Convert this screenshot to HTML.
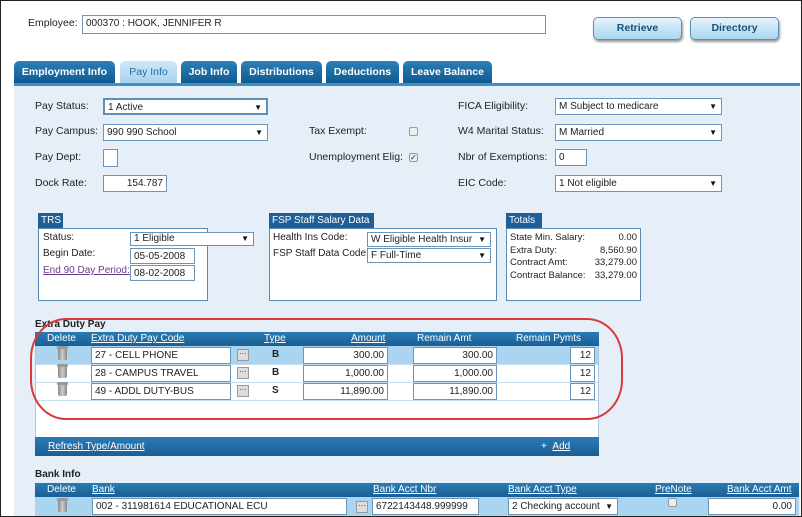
<!DOCTYPE html>
<html><head><style>
*{box-sizing:border-box;margin:0;padding:0}
body{width:802px;height:517px;overflow:hidden;background:#fff;font-family:"Liberation Sans",sans-serif;font-size:10.5px;color:#222;position:relative}
.a{position:absolute}
.frame{left:0;top:0;width:802px;height:517px;border:1px solid #222;z-index:50;pointer-events:none}
.inp{position:absolute;background:#fff;border:1px solid #6a95b8;height:17px;line-height:15px;padding:0 3px;font-size:10px;white-space:nowrap;overflow:hidden}
.sel:after{content:"▼";position:absolute;right:4px;top:0;font-size:8px;color:#111}
.r{text-align:right}
.tab{position:absolute;top:61px;height:22px;background:linear-gradient(#2a80b8,#0f5a8f);color:#fff;font-weight:bold;font-size:10.5px;line-height:22px;text-align:center;border-radius:5px 5px 0 0}
.btn{position:absolute;top:17px;height:23px;border:1px solid #5a8fb5;border-radius:5px;background:linear-gradient(#e6f4fc,#a9d6f0);color:#1c4f7a;font-weight:bold;text-align:center;line-height:21px;font-size:10.5px;box-shadow:1px 2px 2px #999}
.lbl{position:absolute;font-size:10.5px}
.gh{position:absolute;height:15px;background:#1d5f96;color:#fff;font-size:10px;line-height:15px;padding:0 3px}
.box{position:absolute;border:1px solid #5a8ab0;background:#fff}
.bar{position:absolute;background:linear-gradient(#2a7bb3,#195f95);color:#fff;font-size:10px;line-height:14px}
.bar span,.u{text-decoration:underline}
.cb{position:absolute;width:9px;height:9px;border:1px solid #999;background:#eee;border-radius:2px;font-size:8px;line-height:7px;text-align:center}
.dots{position:absolute;width:12px;height:12px;border:1px solid #999;background:#ddd;font-size:8px;line-height:8px;text-align:center}
.can{position:absolute;width:9px;height:12px;background:linear-gradient(90deg,#888,#ccc,#888);border-radius:1px 1px 2px 2px}
.can:before{content:"";position:absolute;left:-1px;top:-2px;width:11px;height:3px;background:#999;border-radius:1px}
</style></head><body>
<div class="a frame"></div>
<div class="lbl" style="left:28px;top:17px">Employee:</div>
<div class="inp" style="left:82px;top:15px;width:464px;height:19px">000370 : HOOK, JENNIFER R</div>
<div class="btn" style="left:593px;width:89px">Retrieve</div>
<div class="btn" style="left:690px;width:89px">Directory</div>

<div class="tab" style="left:14px;width:101px">Employment Info</div>
<div class="tab" style="left:120px;width:57px;background:linear-gradient(#cfe8f8,#a8d3ef);color:#2a6c9c;font-weight:normal">Pay Info</div>
<div class="tab" style="left:181px;width:56px">Job Info</div>
<div class="tab" style="left:241px;width:81px">Distributions</div>
<div class="tab" style="left:326px;width:73px">Deductions</div>
<div class="tab" style="left:403px;width:89px">Leave Balance</div>
<div class="a" style="left:14px;top:83px;width:786px;height:3px;background:#3f8fc6"></div>
<div class="a" style="left:14px;top:86px;width:786px;height:431px;background:#e6eff7"></div>

<div class="lbl" style="left:35px;top:100px">Pay Status:</div>
<div class="inp sel" style="left:103px;top:98px;width:165px;border:2px solid #5a90bb">1 Active</div>
<div class="lbl" style="left:35px;top:125px">Pay Campus:</div>
<div class="inp sel" style="left:103px;top:124px;width:165px">990 990 School</div>
<div class="lbl" style="left:35px;top:151px">Pay Dept:</div>
<div class="inp" style="left:103px;top:149px;width:15px;height:18px"></div>
<div class="lbl" style="left:35px;top:177px">Dock Rate:</div>
<div class="inp r" style="left:103px;top:175px;width:64px;height:17px">154.787</div>
<div class="lbl" style="left:309px;top:125px">Tax Exempt:</div>
<div class="cb" style="left:409px;top:127px"></div>
<div class="lbl" style="left:309px;top:151px">Unemployment Elig:</div>
<div class="cb" style="left:409px;top:153px">✓</div>
<div class="lbl" style="left:458px;top:100px">FICA Eligibility:</div>
<div class="inp sel" style="left:555px;top:98px;width:167px">M Subject to medicare</div>
<div class="lbl" style="left:458px;top:125px">W4 Marital Status:</div>
<div class="inp sel" style="left:555px;top:124px;width:167px">M Married</div>
<div class="lbl" style="left:458px;top:151px">Nbr of Exemptions:</div>
<div class="inp" style="left:555px;top:149px;width:32px">0</div>
<div class="lbl" style="left:458px;top:177px">EIC Code:</div>
<div class="inp sel" style="left:555px;top:175px;width:167px">1 Not eligible</div>

<div class="gh" style="left:38px;top:213px;width:25px">TRS</div>
<div class="box" style="left:38px;top:228px;width:170px;height:73px"></div>
<div class="lbl" style="left:43px;top:232px;font-size:10px">Status:</div>
<div class="inp sel" style="left:130px;top:232px;width:124px;height:14px;line-height:12px">1 Eligible</div>
<div class="lbl" style="left:43px;top:248px;font-size:10px">Begin Date:</div>
<div class="inp" style="left:130px;top:248px;width:65px;height:16px">05-05-2008</div>
<div class="lbl u" style="left:43px;top:265px;font-size:10px;color:#6a3a8a">End 90 Day Period:</div>
<div class="inp" style="left:130px;top:265px;width:65px;height:16px">08-02-2008</div>

<div class="gh" style="left:269px;top:213px;width:105px">FSP Staff Salary Data</div>
<div class="box" style="left:269px;top:228px;width:228px;height:73px"></div>
<div class="lbl" style="left:273px;top:232px;font-size:10px">Health Ins Code:</div>
<div class="inp sel" style="left:367px;top:232px;width:124px;height:15px;line-height:13px">W Eligible Health Insur</div>
<div class="lbl" style="left:273px;top:248px;font-size:10px">FSP Staff Data Code:</div>
<div class="inp sel" style="left:367px;top:248px;width:124px;height:15px;line-height:13px">F Full-Time</div>

<div class="gh" style="left:506px;top:213px;width:36px">Totals</div>
<div class="box" style="left:506px;top:228px;width:135px;height:73px"></div>
<div class="lbl" style="left:510px;top:232px;font-size:9.5px;line-height:12.5px">State Min. Salary:<br>Extra Duty:<br>Contract Amt:<br>Contract Balance:</div>
<div class="lbl r" style="left:580px;top:232px;width:57px;font-size:9.5px;line-height:12.5px">0.00<br>8,560.90<br>33,279.00<br>33,279.00</div>

<div class="lbl" style="left:35px;top:319px;font-weight:bold;font-size:10px">Extra Duty Pay</div>
<div class="a" style="left:35px;top:332px;width:564px;height:123px;background:#fff;border:1px solid #a9c9e2"></div>
<div class="bar" style="left:35px;top:332px;width:564px;height:14px">
<div class="a" style="left:12px">Delete</div><span class="a" style="left:56px">Extra Duty Pay Code</span><span class="a" style="left:229px">Type</span><span class="a" style="left:316px">Amount</span><div class="a" style="left:382px">Remain Amt</div><div class="a" style="left:481px">Remain Pymts</div></div>
<div class="a" style="left:36px;top:346px;width:562px;height:18px;background:#a9d5f0"></div>
<div class="a" style="left:36px;top:364px;width:562px;height:1px;background:#c5dcee"></div>
<div class="a" style="left:36px;top:382px;width:562px;height:1px;background:#c5dcee"></div>
<div class="a" style="left:36px;top:400px;width:562px;height:1px;background:#c5dcee"></div>
<div class="can" style="left:58px;top:348px"></div>
<div class="can" style="left:58px;top:366px"></div>
<div class="can" style="left:58px;top:384px"></div>
<div class="inp" style="left:91px;top:347px;width:140px">27 - CELL PHONE</div>
<div class="inp" style="left:91px;top:365px;width:140px">28 - CAMPUS TRAVEL</div>
<div class="inp" style="left:91px;top:383px;width:140px">49 - ADDL DUTY-BUS</div>
<div class="dots" style="left:237px;top:349px">···</div>
<div class="dots" style="left:237px;top:367px">···</div>
<div class="dots" style="left:237px;top:385px">···</div>
<div class="lbl" style="left:272px;top:349px;font-weight:bold;font-size:10px">B</div>
<div class="lbl" style="left:272px;top:367px;font-weight:bold;font-size:10px">B</div>
<div class="lbl" style="left:272px;top:385px;font-weight:bold;font-size:10px">S</div>
<div class="inp r" style="left:303px;top:347px;width:85px">300.00</div>
<div class="inp r" style="left:303px;top:365px;width:85px">1,000.00</div>
<div class="inp r" style="left:303px;top:383px;width:85px">11,890.00</div>
<div class="inp r" style="left:413px;top:347px;width:84px">300.00</div>
<div class="inp r" style="left:413px;top:365px;width:84px">1,000.00</div>
<div class="inp r" style="left:413px;top:383px;width:84px">11,890.00</div>
<div class="inp r" style="left:570px;top:347px;width:25px">12</div>
<div class="inp r" style="left:570px;top:365px;width:25px">12</div>
<div class="inp r" style="left:570px;top:383px;width:25px">12</div>
<div class="bar" style="left:35px;top:437px;width:564px;height:19px;line-height:19px"><span class="a" style="left:13px">Refresh Type/Amount</span><div class="a" style="left:506px">+&nbsp;&nbsp;<span>Add</span></div></div>
<div class="a" style="left:30px;top:318px;width:593px;height:102px;border:2.5px solid #d9393a;border-radius:36px/40px;z-index:10"></div>

<div class="lbl" style="left:35px;top:469px;font-weight:bold;font-size:10px">Bank Info</div>
<div class="bar" style="left:35px;top:483px;width:764px;height:14px">
<div class="a" style="left:12px">Delete</div><span class="a" style="left:57px">Bank</span><span class="a" style="left:338px">Bank Acct Nbr</span><span class="a" style="left:473px">Bank Acct Type</span><span class="a" style="left:620px">PreNote</span><span class="a" style="left:692px">Bank Acct Amt</span></div>
<div class="a" style="left:35px;top:497px;width:764px;height:20px;background:#a9d5f0"></div>
<div class="can" style="left:58px;top:500px"></div>
<div class="inp" style="left:92px;top:498px;width:255px">002 - 311981614 EDUCATIONAL ECU</div>
<div class="dots" style="left:356px;top:501px">···</div>
<div class="inp" style="left:372px;top:498px;width:107px">6722143448.999999</div>
<div class="inp sel" style="left:508px;top:498px;width:110px">2 Checking account</div>
<div class="cb" style="left:668px;top:498px"></div>
<div class="inp r" style="left:708px;top:498px;width:88px">0.00</div>
</body></html>
